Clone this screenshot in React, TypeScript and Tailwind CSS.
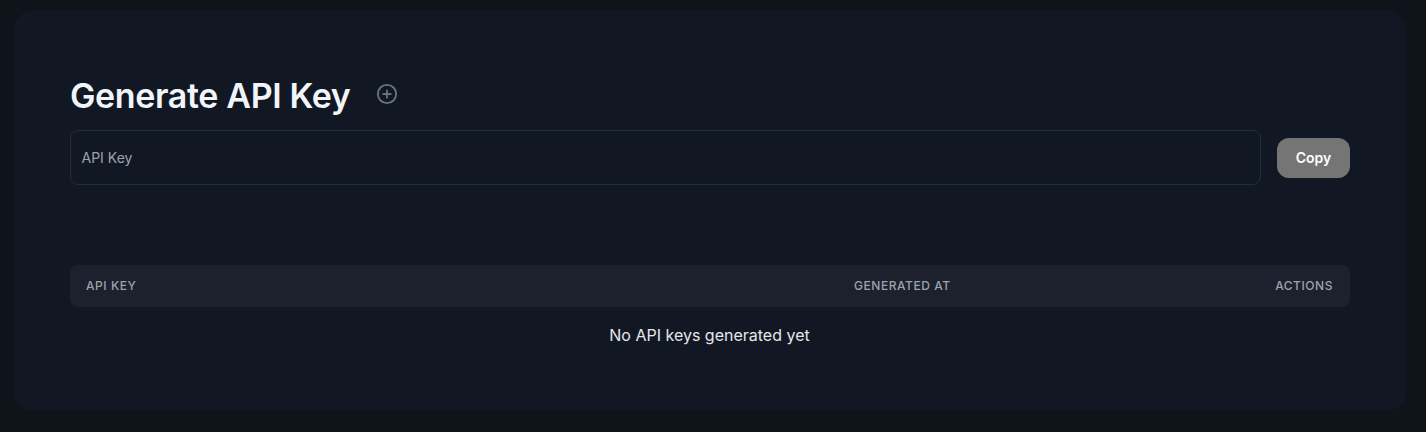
import { CirclePlus } from "lucide-react";

const App = () => {
  return (
    <div className="h-[432px] w-full overflow-hidden bg-[#0f131a] pl-[14px] pr-[20px] pt-[10px] font-['Inter',sans-serif]">
      <div className="h-[401px] rounded-[20px] bg-[#121823] px-[56px] pt-[63px]">
        <div className="flex h-[44px] items-center gap-[26px]">
          <h1 className="mt-[2px] text-[34px] font-semibold leading-[44px] tracking-[-0.36px] text-[#f1f5f9]">
            Generate API Key
          </h1>
          <CirclePlus className="mb-[2px] h-[22px] w-[22px] text-[#6b7280]" strokeWidth={2} />
        </div>

        <div className="mt-[13px] flex items-center gap-[16px]">
          <div className="flex h-[55px] flex-1 items-center rounded-lg border border-[#252c3a] px-[10.5px] text-sm text-[#9ca3af]">
            API Key
          </div>
          <button className="h-[40px] w-[73px] rounded-xl bg-[#757575] text-sm font-semibold text-white">
            Copy
          </button>
        </div>

        <div className="mt-[80px]">
          <div className="flex h-[42px] items-center rounded-lg bg-[#1c212d] pl-[16px] pr-[17px] text-xs font-medium tracking-[0.55px] text-[#9ca3af]">
            <div className="w-[768px]">API KEY</div>
            <div className="flex-1">GENERATED AT</div>
            <div>ACTIONS</div>
          </div>
          <p className="mt-[18px] pr-[1px] text-center text-base font-normal leading-[21px] text-[#e5e7eb]">
            No API keys generated yet
          </p>
        </div>
      </div>
    </div>
  );
};

export default App;
